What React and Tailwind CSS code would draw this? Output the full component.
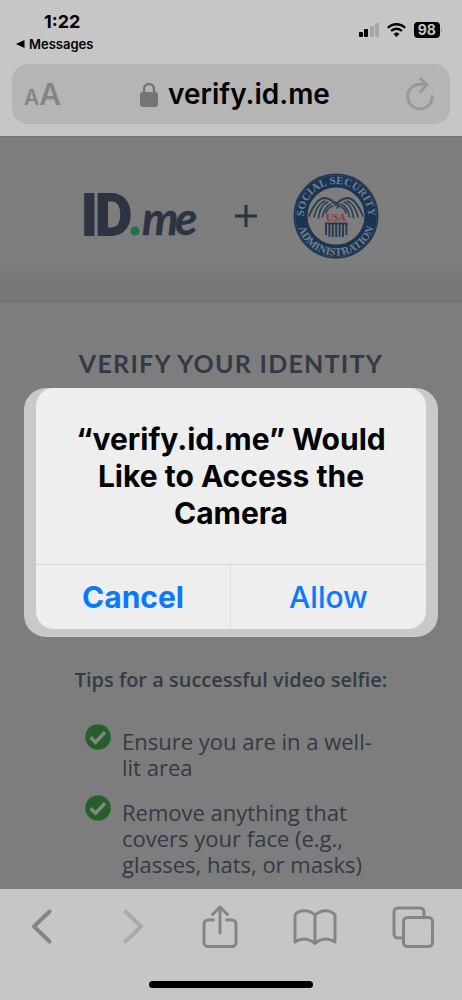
const tips = [
  'Ensure you are in a well-\u200blit area',
  'Remove anything that covers your face (e.g., glasses, hats, or masks)',
];

function StatusBar() {
  return (
    <div className="flex items-start justify-between pl-4 pr-5">
      <div className="flex flex-col">
        <span className="pl-7 text-[18px] font-bold leading-5">1:22</span>
        <button type="button" className="mt-0.5 flex items-center gap-1 text-[13px] font-semibold leading-5">
          <svg width="9" height="8" viewBox="0 0 9 8" aria-hidden="true">
            <path d="M8.5 0v8L0 4z" fill="currentColor" />
          </svg>
          Messages
        </button>
      </div>
      <div className="mt-2.5 flex items-center gap-2">
        <svg width="20" height="14" viewBox="0 0 20 14" aria-hidden="true">
          <rect x="0" y="9" width="4" height="5" rx="1" />
          <rect x="5" y="6" width="4" height="8" rx="1" />
          <rect x="11" y="3" width="4" height="11" rx="1" fill="#a5a5a5" />
          <rect x="16" y="0" width="4" height="14" rx="1" fill="#a5a5a5" />
        </svg>
        <svg width="19" height="14" viewBox="0 0 19 14" fill="none" stroke="black" strokeWidth="2.4" aria-hidden="true">
          <path d="M.9 4.8a12.3 12.3 0 0 1 17.2 0" />
          <path d="M4.1 8a7.7 7.7 0 0 1 10.8 0" />
          <path d="M9.5 14 6.6 11a4.1 4.1 0 0 1 5.8 0z" fill="black" stroke="none" />
        </svg>
        <div className="flex items-center gap-px">
          <span className="rounded bg-black px-1 text-[14px] font-bold leading-4 text-[#c6c6c6]">98</span>
          <span className="h-1 w-px rounded bg-[#999999]" />
        </div>
      </div>
    </div>
  );
}

function AddressBar() {
  return (
    <div className="mx-3 mt-2.5 flex h-[60px] items-center justify-between rounded-2xl bg-[#b5b5b5] pl-3 pr-4">
      <button type="button" aria-label="Page settings" className="flex w-10 items-baseline font-semibold text-[#858585]">
        <span className="text-[21px]">A</span>
        <span className="text-[30px]">A</span>
      </button>
      <div className="flex items-center gap-2.5">
        <svg width="18" height="25" viewBox="0 0 18 25" aria-hidden="true">
          <rect x="0" y="10" width="18" height="15" rx="3" fill="#757575" />
          <path d="M4 11V7a5 5 0 0 1 10 0v4" fill="none" stroke="#757575" strokeWidth="2.4" />
        </svg>
        <span className="text-[28px] font-semibold leading-9">verify.id.me</span>
      </div>
      <button type="button" aria-label="Reload">
        <svg width="28" height="34" viewBox="0 0 28 34" fill="none" stroke="#989898" strokeWidth="3" strokeLinecap="round" strokeLinejoin="round">
          <path d="M20.500 7.200H14A12.300 12.300 0 1 0 26.300 19.500" />
          <path d="m14.500 1.800 6.500 6-6.500 7" />
        </svg>
      </button>
    </div>
  );
}

function IdMeLogo() {
  return (
    <svg width="124" height="76" viewBox="-4 -13 124 76" role="img" aria-label="ID.me">
      <g fill="#2b3440" stroke="#2b3440" strokeLinejoin="round">
        <text x="-2 12" y="44" fontSize="57" strokeWidth="2" className="font-['Roboto',sans-serif] font-bold">ID</text>
        <text x="59 92" y="44" fontSize="46" strokeWidth="0.400" className="font-['Lato',sans-serif] font-bold italic">me</text>
      </g>
      <circle cx="52" cy="40" r="6" fill="#7d7d7d" />
      <circle cx="52" cy="40" r="4.500" fill="#1f7246" />
    </svg>
  );
}

function SocialSecuritySeal() {
  const stripes = [0, 1, 2, 3, 4, 5, 6];
  const wing = (
    <>
      <path d="M43 32Q38 25 31 25Q23 26 16 43" strokeWidth="1.800" />
      <path d="M32 28Q24 31 21 44" />
      <path d="M35 29Q27 32 25.500 45" />
      <path d="M38 31Q31 34 29.500 44" />
      <path d="M40 33Q34 35 33 40" />
    </>
  );

  return (
    <svg width="86" height="86" viewBox="0 0 86 86" role="img" aria-label="Social Security Administration">
      <defs>
        <path id="sealTop" d="M11 43a32 32 0 0 1 64 0" />
        <path id="sealBottom" d="M3.500 39v4a39.500 39.500 0 0 0 79 0v-4" />
      </defs>
      <circle cx="43" cy="43" r="35.500" fill="none" stroke="#1c3453" strokeWidth="14" />
      <circle cx="43" cy="43" r="41" fill="none" stroke="#3d4f63" strokeWidth="0.600" />
      <g fill="#72808e" fontSize="11" textAnchor="middle" className="font-['Liberation_Serif',serif] font-bold">
        <text><textPath href="#sealTop" startOffset="50%">SOCIAL SECURITY</textPath></text>
        <text><textPath href="#sealBottom" startOffset="50%">ADMINISTRATION</textPath></text>
      </g>
      <g fill="none" stroke="#2b3c50" strokeWidth="1.500" strokeLinecap="round">
        {wing}
        <g transform="matrix(-1 0 0 1 86 0)">{wing}</g>
        <path d="M40 30q4-2 6 2l-2 3" />
      </g>
      <g stroke="#263a50" strokeWidth="2">
        {stripes.map((i) => (
          <path key={i} d={`M${33 + i * 3.4} 50V${62 + (i > 0 && i < 6 ? 2 : 0)}`} />
        ))}
        <path d="M32 50.500h22.500" />
      </g>
      <text x="43" y="48" fontSize="10" textAnchor="middle" fill="#932f38" className="font-['Liberation_Serif',serif] font-bold">USA</text>
    </svg>
  );
}

function CheckIcon() {
  return (
    <svg className="shrink-0" width="26" height="26" viewBox="0 0 26 26" aria-hidden="true">
      <circle cx="13" cy="13" r="12.800" fill="#265f2b" />
      <path d="m5.700 13.300 4.800 4.900L20 8.300" fill="none" stroke="#858585" strokeWidth="3.500" />
    </svg>
  );
}

function PermissionDialog() {
  return (
    <div className="absolute inset-x-6 top-[251px] rounded-[22px] bg-[#c9c9c9] px-3 pb-2">
      <div role="alertdialog" aria-labelledby="dialog-title" className="overflow-hidden rounded-[18px] bg-[#eeeeef]">
        <h2 id="dialog-title" className="px-8 pb-8 pt-[33px] text-center text-[30px] font-bold leading-[37px]">
          “verify.id.me” Would Like to Access the Camera
        </h2>
        <div className="grid grid-cols-2 border-t border-[#d4d5d6] text-[30px] leading-10 text-[#087aff]">
          <button type="button" className="border-r border-[#dcdddd] py-3 font-bold">Cancel</button>
          <button type="button" className="py-3 font-medium">Allow</button>
        </div>
      </div>
    </div>
  );
}

function Toolbar() {
  return (
    <footer className="bg-[#c6c6c6] pb-3 pt-4 text-[#858585]">
      <nav className="flex items-center justify-between px-7">
        <button type="button" aria-label="Back" className="w-9">
          <svg width="27" height="44" viewBox="0 0 27 44" fill="none" stroke="currentColor" strokeWidth="4" strokeLinecap="round" strokeLinejoin="round">
            <path d="M21.500 6.500 6 21.500l15.500 15" />
          </svg>
        </button>
        <button type="button" aria-label="Forward" className="text-[#aaaaaa]">
          <svg width="27" height="44" viewBox="0 0 27 44" fill="none" stroke="currentColor" strokeWidth="4" strokeLinecap="round" strokeLinejoin="round">
            <path d="m6.500 6.500 15.500 15-15.500 15" />
          </svg>
        </button>
        <button type="button" aria-label="Share">
          <svg width="36" height="44" viewBox="0 0 36 44" fill="none" stroke="currentColor" strokeWidth="3" strokeLinecap="round" strokeLinejoin="round">
            <path strokeLinecap="butt" d="M12.500 15H6a4 4 0 0 0-4 4v18.500a4 4 0 0 0 4 4h24a4 4 0 0 0 4-4V19a4 4 0 0 0-4-4h-6.500" />
            <path d="M18 28V2M10.500 9.500 18 2l7.500 7.500" />
          </svg>
        </button>
        <button type="button" aria-label="Bookmarks">
          <svg width="44" height="44" viewBox="0 0 44 44" fill="none" stroke="currentColor" strokeWidth="3" strokeLinecap="round" strokeLinejoin="round">
            <path d="M22 10Q17.500 5.500 11 5.700T2 10v27q10-6.500 20 1.500 10-8 20-1.500V10q-3-4-9-4.300T22 10v28" />
          </svg>
        </button>
        <button type="button" aria-label="Tabs">
          <svg width="42" height="44" viewBox="0 0 42 44" fill="none" stroke="currentColor" strokeWidth="3" strokeLinejoin="round">
            <path d="M10 33H6a4 4 0 0 1-4-4V7a4 4 0 0 1 4-4h22a4 4 0 0 1 4 4v5" />
            <rect x="11.500" y="12.500" width="29" height="29" rx="4" />
          </svg>
        </button>
      </nav>
      <div className="mx-auto mt-8 h-[7px] w-[164px] rounded-full bg-black" />
    </footer>
  );
}

export default function App() {
  return (
    <div className="flex min-h-screen flex-col bg-[#7d7d7d] font-['Inter',sans-serif] text-black">
      <header className="bg-[#c6c6c6] pb-3 pt-3">
        <StatusBar />
        <AddressBar />
      </header>

      <main className="relative flex-1 border-t border-[#727272] text-[#333a45]">
        <div className="flex items-center justify-center bg-gradient-to-b from-[#7d7d7d] from-75% to-[#747474] pb-11 pr-1 pt-9">
          <IdMeLogo />
          <svg className="ml-8 mr-9" width="22" height="22" viewBox="0 0 22 22" stroke="#29323e" strokeWidth="3" aria-hidden="true">
            <path d="M11 0v22M0 11h22" />
          </svg>
          <SocialSecuritySeal />
        </div>

        <section className="pt-11">
          <h1 className="text-center font-['Lato',sans-serif] text-[25px] font-bold leading-8 tracking-wider">VERIFY YOUR IDENTITY</h1>
          <div className="mt-72 font-['Open_Sans',sans-serif] leading-[26px]">
            <h2 className="text-center text-[20px] font-semibold">Tips for a successful video selfie:</h2>
            <ul className="mx-auto mt-[31px] flex w-[292px] flex-col gap-[15px] text-[22px]">
              {tips.map((tip) => (
                <li key={tip} className="flex items-start gap-[11px]">
                  <CheckIcon />
                  <span className="pt-1">{tip}</span>
                </li>
              ))}
            </ul>
          </div>
        </section>

        <div className="text-black">
          <PermissionDialog />
        </div>
      </main>

      <Toolbar />
    </div>
  );
}
